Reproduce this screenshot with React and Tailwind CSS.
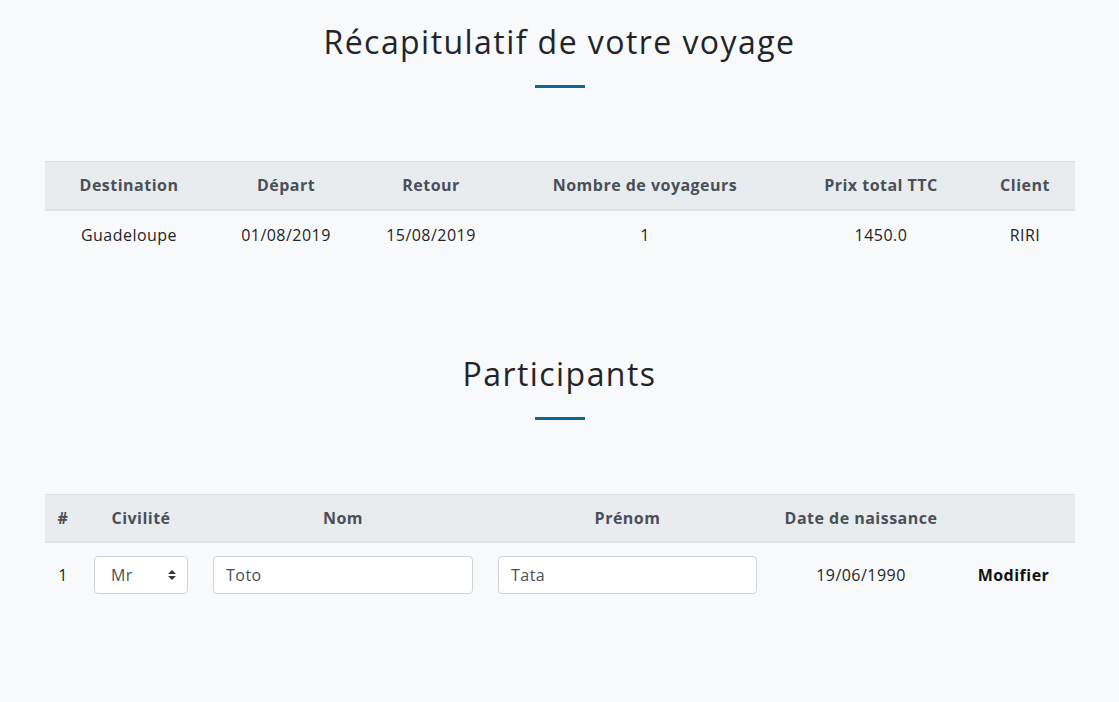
import React from "react";

const font = { fontFamily: "'Open Sans', 'Liberation Sans', sans-serif" };

function Title({ children }) {
  return (
    <div className="flex flex-col items-center">
      <h1 className="text-[32px] font-normal tracking-[0.045em] text-[#212529] leading-[44px]">{children}</h1>
      <div className="mt-[21px] w-[50px] h-[3px] bg-[#0e6896]" />
    </div>
  );
}

export default function App() {
  const recap = [
    ["Destination", "w-[168px]"],
    ["Départ", "w-[146px]"],
    ["Retour", "w-[144px]"],
    ["Nombre de voyageurs", "w-[284px]"],
    ["Prix total TTC", "w-[188px]"],
    ["Client", "w-[100px]"],
  ];
  const values = ["Guadeloupe", "01/08/2019", "15/08/2019", "1", "1450.0", "RIRI"];

  return (
    <div className="min-h-[702px] bg-[#f8f9fa] text-[#212529] text-[16px] tracking-[0.03em]" style={font}>
      <div className="pt-[20px]">
        <Title>Récapitulatif de votre voyage</Title>
      </div>

      <div className="px-[45px] mt-[73px]">
        <table className="w-full border-collapse table-fixed">
          <thead>
            <tr className="bg-[#e9ecef] border-t border-[#dee2e6] border-b-2">
              {recap.map(([h, w]) => (
                <th key={h} className={`${w} h-[48px] font-bold text-[#495057] text-center`}>
                  {h}
                </th>
              ))}
            </tr>
          </thead>
          <tbody>
            <tr>
              {values.map((v, i) => (
                <td key={i} className="h-[50px] text-center">
                  {v}
                </td>
              ))}
            </tr>
          </tbody>
        </table>
      </div>

      <div className="mt-[92px]">
        <Title>Participants</Title>
      </div>

      <div className="px-[45px] mt-[74px]">
        <table className="w-full border-collapse table-fixed">
          <thead>
            <tr className="bg-[#e9ecef] border-t border-[#dee2e6] border-b-2">
              <th className="w-[36px] h-[48px] font-bold text-[#495057] text-center">#</th>
              <th className="w-[120px] font-bold text-[#495057] text-center">Civilité</th>
              <th className="w-[284px] font-bold text-[#495057] text-center">Nom</th>
              <th className="w-[285px] font-bold text-[#495057] text-center">Prénom</th>
              <th className="w-[182px] font-bold text-[#495057] text-center">Date de naissance</th>
              <th className="w-[123px]"></th>
            </tr>
          </thead>
          <tbody>
            <tr>
              <td className="h-[64px] text-center">1</td>
              <td className="px-[13px]">
                <div className="relative">
                  <select
                    defaultValue="Mr"
                    className="appearance-none w-full h-[38px] bg-white border border-[#ced4da] rounded-[4px] pl-[16px] text-[#495057] text-[16px] tracking-[0.03em] outline-none"
                    style={font}
                  >
                    <option>Mr</option>
                    <option>Mme</option>
                  </select>
                  <svg className="absolute right-[12px] top-[14px] pointer-events-none" width="8" height="10" viewBox="0 0 8 10">
                    <path d="M4 0L8 4H0z M4 10L0 6H8z" fill="#343a40" />
                  </svg>
                </div>
              </td>
              <td className="px-[12px]">
                <input
                  defaultValue="Toto"
                  className="w-full h-[38px] bg-white border border-[#ced4da] rounded-[4px] px-[12px] text-[#495057] text-[16px] tracking-[0.03em] outline-none"
                  style={font}
                />
              </td>
              <td className="px-[13px]">
                <input
                  defaultValue="Tata"
                  className="w-full h-[38px] bg-white border border-[#ced4da] rounded-[4px] px-[12px] text-[#495057] text-[16px] tracking-[0.03em] outline-none"
                  style={font}
                />
              </td>
              <td className="text-center">19/06/1990</td>
              <td className="text-center font-bold text-[#111]">Modifier</td>
            </tr>
          </tbody>
        </table>
      </div>
    </div>
  );
}
